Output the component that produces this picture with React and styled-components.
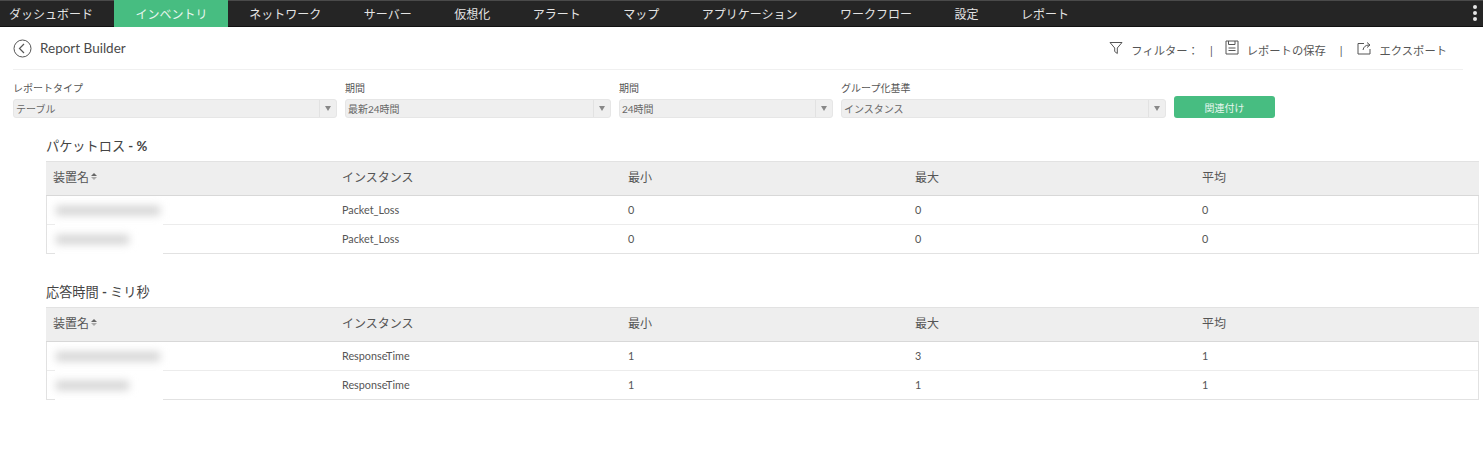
import React from 'react';
import styled, { createGlobalStyle } from 'styled-components';

const GlobalStyle = createGlobalStyle`
  html, body {
    margin: 0;
    padding: 0;
    background: #fff;
  }
  body {
    font-family: Lato, "Noto Sans CJK JP", sans-serif;
    color: #444;
  }
  * {
    box-sizing: border-box;
  }
`;

const NavBar = styled.nav`
  display: flex;
  align-items: stretch;
  height: 27px;
  background: #252525;
  border-top: 1px solid #4a4a4a;
  border-bottom: 1px solid #111;
  padding-left: 9px;
  position: relative;
`;

const NavItem = styled.div`
  display: flex;
  align-items: center;
  padding: 0 ${({ $active }) => ($active ? '20.5px' : '21.25px')} 0 21.25px;
  margin-top: -1px;
  margin-bottom: -1px;
  font-size: 12px;
  white-space: nowrap;
  color: ${({ $active }) => ($active ? '#e8f6ef' : '#e4e4e4')};
  background: ${({ $active }) => ($active ? '#47bd81' : 'transparent')};
  &:first-child {
    padding-left: 0;
  }
`;

const MoreDots = styled.div`
  position: absolute;
  right: 6px;
  top: 4px;
  display: flex;
  flex-direction: column;
  gap: 2px;
  span {
    width: 4px;
    height: 4px;
    border-radius: 50%;
    background: #e6e6e6;
  }
`;

const TitleBar = styled.div`
  display: flex;
  align-items: center;
  justify-content: space-between;
  height: 43px;
  margin: 0 20px 0 13px;
  border-bottom: 1px solid #f0f0f0;
`;

const TitleLeft = styled.div`
  display: flex;
  align-items: center;
  gap: 8px;
  font-size: 13.5px;
  line-height: 19px;
  color: #4a4a4a;
`;

const Actions = styled.div`
  display: flex;
  align-items: center;
  font-size: 11.3px;
  color: #555;
  padding: 4px 16px 0 0;
`;

const Action = styled.div`
  display: flex;
  align-items: center;
  gap: 8px;
  svg {
    margin-top: -5px;
  }
`;

const Pipe = styled.span`
  margin: 1px ${({ $tight }) => ($tight ? '12px 0 11px' : '14px 0 14px')};
  font-size: 11px;
  color: #555;
`;

const FilterRow = styled.div`
  display: grid;
  grid-template-columns: 324px 266px 214px 325px 101px;
  column-gap: 8px;
  align-items: end;
  margin: 11px 0 0 13px;
`;

const Field = styled.div`
  display: flex;
  flex-direction: column;
  gap: 3px;
`;

const FieldLabel = styled.label`
  font-size: 10px;
  line-height: 15px;
  color: #555;
`;

const SelectBox = styled.div`
  display: flex;
  align-items: stretch;
  height: 19px;
  background: #efefef;
  border: 1px solid #e6e6e6;
  border-radius: 3px;
  font-size: 10px;
  color: #666;
`;

const SelectValue = styled.div`
  flex: 1;
  display: flex;
  align-items: center;
  padding-left: 2px;
`;

const SelectArrow = styled.div`
  width: 17px;
  border-left: 1px solid #e2e2e2;
  display: flex;
  align-items: center;
  justify-content: center;
  &::after {
    content: '';
    border-left: 3px solid transparent;
    border-right: 3px solid transparent;
    border-top: 5px solid #888;
  }
`;

const GreenButton = styled.button`
  height: 22px;
  background: #47bd81;
  border: 0;
  border-radius: 3px;
  color: #e8f6ef;
  font-family: inherit;
  font-size: 10px;
  padding: 0;
`;

const Section = styled.section`
  margin: ${({ $first }) => ($first ? '18px' : '28px')} 4px 0 46px;
`;

const SectionTitle = styled.h3`
  margin: 0 0 5px;
  font-size: 13.2px;
  font-weight: 400;
  line-height: 20px;
  color: #444;
  b {
    font-weight: 700;
  }
`;

const TableGrid = styled.div`
  border: 1px solid #e2e2e2;
  border-top: 0;
`;

const HeadRow = styled.div`
  display: grid;
  grid-template-columns: 289px 286px 287px 287px 1fr;
  height: 35px;
  align-items: center;
  background: #eeeeee;
  border-top: 1px solid #e2e2e2;
  border-bottom: 1px solid #d8d8d8;
  margin: 0 -1px;
  padding: 0 0 4px 7px;
  font-size: 12px;
  color: #555;
`;

const BodyRow = styled.div`
  display: grid;
  grid-template-columns: 289px 286px 287px 287px 1fr;
  height: ${({ $first }) => ($first ? '29px' : '28px')};
  align-items: center;
  padding: 0 0 2px 6px;
  font-size: 10.8px;
  color: #555;
  border-bottom: ${({ $first }) => ($first ? '1px solid #ececec' : '0')};
`;

const HeadName = styled.div`
  display: flex;
  align-items: center;
  gap: 2px;
`;

const SortIcon = styled.span`
  display: inline-flex;
  flex-direction: column;
  gap: 1px;
  &::before,
  &::after {
    content: '';
    border-left: 3.5px solid transparent;
    border-right: 3.5px solid transparent;
  }
  &::before {
    border-bottom: 3px solid #666;
  }
  &::after {
    border-top: 3px solid #aaa;
  }
`;

const DeviceCell = styled.div`
  position: relative;
  height: 100%;
`;

// white patch with the blurred device name, it covers the row line
const BlurPatch = styled.div`
  position: absolute;
  left: 2px;
  top: 0;
  width: 108px;
  height: 30px;
  background: #fff;
  z-index: 1;
  &::after {
    content: '';
    position: absolute;
    left: 1px;
    top: 10px;
    height: 9px;
    width: ${({ $width }) => $width}px;
    background: #d2d2d2;
    filter: blur(4px);
  }
`;

const navItems = ['ダッシュボード', 'インベントリ', 'ネットワーク', 'サーバー', '仮想化', 'アラート', 'マップ', 'アプリケーション', 'ワークフロー', '設定', 'レポート'];

const filters = [
  { label: 'レポートタイプ', value: 'テーブル' },
  { label: '期間', value: '最新24時間' },
  { label: '期間', value: '24時間' },
  { label: 'グループ化基準', value: 'インスタンス' },
];

const tables = [
  { name: 'パケットロス', sep: ' - %', unit: '', rows: [['Packet_Loss', 0, 0, 0], ['Packet_Loss', 0, 0, 0]] },
  { name: '応答時間', sep: ' - ', unit: 'ミリ秒', rows: [['ResponseTime', 1, 3, 1], ['ResponseTime', 1, 1, 1]] },
];

const BackIcon = () => (
  <svg width="19" height="19" viewBox="0 0 19 19" fill="none" stroke="#555" strokeWidth="1">
    <circle cx="9.5" cy="9.5" r="8.5" />
    <path d="M11 5 L6.5 9.5 L11 14" strokeWidth="1.2" />
  </svg>
);

const FilterIcon = () => (
  <svg width="14" height="14" viewBox="0 0 14 14" fill="none" stroke="#555" strokeWidth="1">
    <path d="M1 1.5 H13 L8.3 7 V12.5 L5.7 10.5 V7 Z" />
  </svg>
);

const SaveIcon = () => (
  <svg width="14" height="15" viewBox="0 0 14 15" fill="none" stroke="#555" strokeWidth="1">
    <path d="M1 1 H13 V14 H1 Z" />
    <path d="M3.5 1 V4.5 H10 V1 M3.5 8 H10.5 M3.5 10.5 H10.5" />
  </svg>
);

const ExportIcon = () => (
  <svg width="15" height="14" viewBox="0 0 15 14" fill="none" stroke="#555" strokeWidth="1">
    <path d="M7 2.5 H1 V13 H13 V8" />
    <path d="M6 9 C6.5 6 8.5 4 12 4 M10 1.5 L13 4 L10 6.5" />
  </svg>
);

const App = () => (
  <>
    <GlobalStyle />
    <NavBar>
      {navItems.map((item, i) => (
        <NavItem key={item} $active={i === 1}>{item}</NavItem>
      ))}
      <MoreDots><span /><span /><span /></MoreDots>
    </NavBar>

    <TitleBar>
      <TitleLeft><BackIcon />Report Builder</TitleLeft>
      <Actions>
        <Action><FilterIcon />フィルター：</Action>
        <Pipe $tight>|</Pipe>
        <Action><SaveIcon />レポートの保存</Action>
        <Pipe>|</Pipe>
        <Action><ExportIcon />エクスポート</Action>
      </Actions>
    </TitleBar>

    <FilterRow>
      {filters.map((f, i) => (
        <Field key={i}>
          <FieldLabel>{f.label}</FieldLabel>
          <SelectBox>
            <SelectValue>{f.value}</SelectValue>
            <SelectArrow />
          </SelectBox>
        </Field>
      ))}
      <GreenButton>関連付け</GreenButton>
    </FilterRow>

    {tables.map((t, ti) => (
      <Section key={t.name} $first={ti === 0}>
        <SectionTitle>{t.name}<b>{t.sep}</b>{t.unit}</SectionTitle>
        <TableGrid>
          <HeadRow>
            <HeadName>装置名<SortIcon /></HeadName>
            <div>インスタンス</div>
            <div>最小</div>
            <div>最大</div>
            <div>平均</div>
          </HeadRow>
          {t.rows.map((r, i) => (
            <BodyRow key={i} $first={i === 0}>
              <DeviceCell><BlurPatch $width={i === 0 ? 104 : 73} /></DeviceCell>
              {r.map((c, j) => <div key={j}>{c}</div>)}
            </BodyRow>
          ))}
        </TableGrid>
      </Section>
    ))}
  </>
);

export default App;
